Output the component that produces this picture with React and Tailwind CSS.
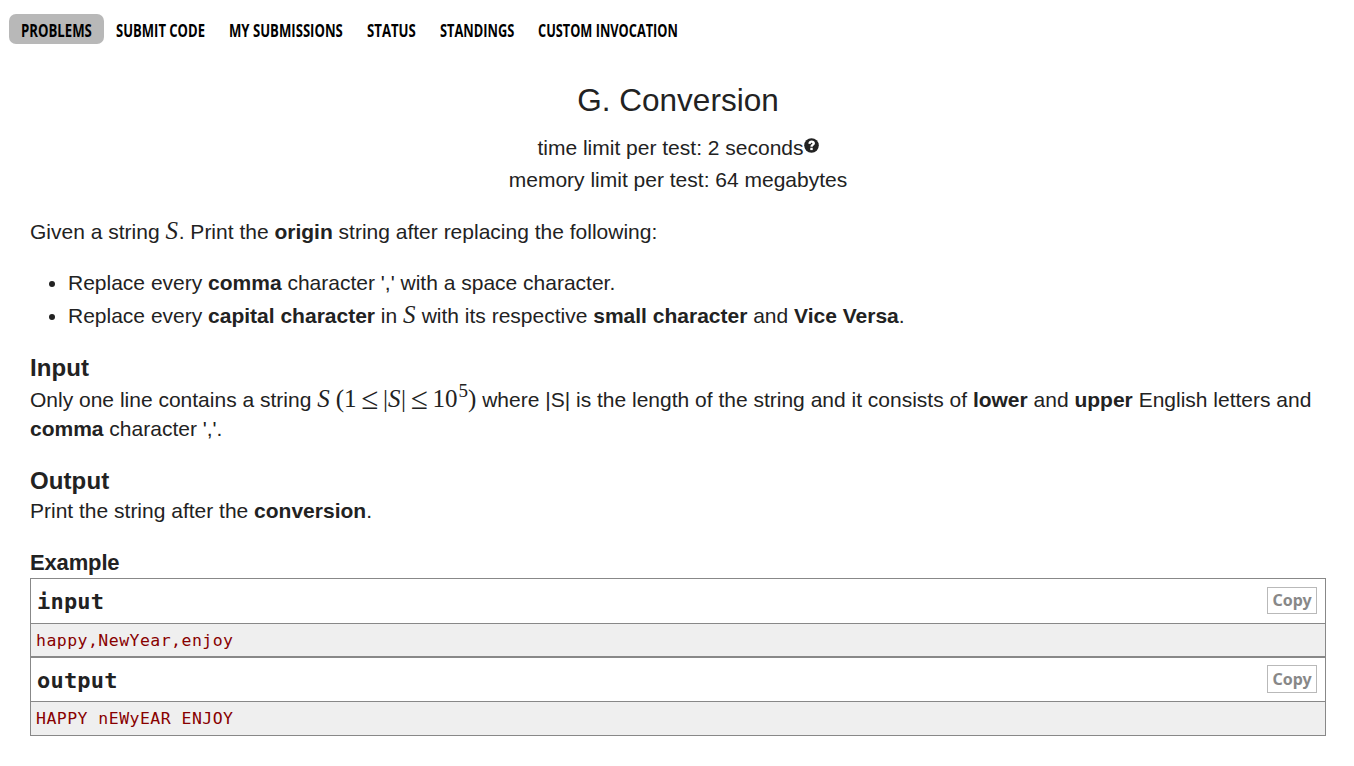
import React from "react";

const NAV = [
  { label: "PROBLEMS", active: true, width: "w-[95px]", scale: "scale-x-[0.732]" },
  { label: "SUBMIT CODE", width: "w-[113px]", scale: "scale-x-[0.724]" },
  { label: "MY SUBMISSIONS", width: "w-[138px]", scale: "scale-x-[0.729]" },
  { label: "STATUS", width: "w-[73px]", scale: "scale-x-[0.732]" },
  { label: "STANDINGS", width: "w-[98px]", scale: "scale-x-[0.713]" },
  { label: "CUSTOM INVOCATION", width: "w-[164px]", scale: "scale-x-[0.709]" },
];

function NavItem({ label, active, width, scale }) {
  return (
    <a
      className={`flex h-[30px] shrink-0 items-center rounded-[7px] pl-3 pt-px whitespace-nowrap ${width} ${active ? "bg-[#b8b8b8]" : ""}`}
    >
      <span className={`inline-block origin-left font-['Open_Sans',sans-serif] text-[18px] leading-[28px] font-bold text-black ${scale}`}>
        {label}
      </span>
    </a>
  );
}

function MathText({ children, className = "" }) {
  return (
    <span className={`font-['Liberation_Serif',serif] text-[25px] leading-[0] tracking-normal ${className}`}>
      {children}
    </span>
  );
}

function LessEqual() {
  return <span className="relative top-0.5 mx-[5px] inline-block w-[16.5px] text-center text-[31px]">≤</span>;
}

function HelpIcon() {
  return (
    <svg viewBox="0 0 16 16" className="mt-[5px] h-[15px] w-[15px] shrink-0">
      <circle cx="8" cy="8" r="7.8" fill="#222" />
      <path d="M4.6 6.1C4.8 3.8 6.3 2.6 8.1 2.6c2.2 0 3.6 1.3 3.6 3.1 0 2.3-2.4 2.4-2.4 3.7H6.8c0-2.5 2.2-2.5 2.2-3.7 0-1.1-1.8-1.1-2 .7z" fill="#fff" />
      <rect x="6.7" y="10.4" width="2.6" height="2.5" fill="#fff" />
    </svg>
  );
}

function Sample({ title, text, titleHeight, textHeight, copyHeight, copyOffset }) {
  return (
    <div className="border border-[#888]">
      <div className={`flex items-start justify-between border-b border-[#888] pl-1.5 pr-2 ${titleHeight}`}>
        <h4 className="pt-2 font-['DejaVu_Sans_Mono',monospace] text-[22px] leading-[30px] font-bold tracking-[0.2px]">
          {title}
        </h4>
        <button
          className={`flex w-[50px] items-center justify-center border border-[#b9b9b9] font-['Noto_Sans',sans-serif] text-[16px] leading-[23px] font-bold text-[#888] ${copyHeight} ${copyOffset}`}
        >
          Copy
        </button>
      </div>
      <pre
        className={`bg-[#efefef] pl-[5px] font-['DejaVu_Sans_Mono',monospace] text-[16.5px] leading-[33px] tracking-[0.46px] text-[#880000] ${textHeight}`}
      >
        {text}
      </pre>
    </div>
  );
}

export default function App() {
  return (
    <div className="h-[766px] w-[1354px] overflow-hidden bg-white font-['Liberation_Sans',sans-serif] text-[21px] leading-[30px] text-[#222]">
      <nav className="flex pt-3.5 pl-[9px]">
        {NAV.map((item) => (
          <NavItem key={item.label} {...item} />
        ))}
      </nav>

      <main className="pr-7 pl-[30px]">
        <header className="flex flex-col items-center pt-[38px]">
          <h1 className="text-[31.5px] leading-[36px]">G. Conversion</h1>
          <div className="mt-[15px] flex h-[32px]">
            <span>time limit per test: 2 seconds</span>
            <HelpIcon />
          </div>
          <div className="h-[32px]">memory limit per test: 64 megabytes</div>
        </header>

        <p className="mt-5 h-[30px] whitespace-nowrap">
          Given a string <MathText className="mr-[0.8px] italic">S</MathText>. Print the <b>origin</b> string after
          replacing the following:
        </p>

        <ul className="mt-[19px] h-[66px] list-disc pl-[38px] leading-[33px] whitespace-nowrap">
          <li>
            Replace every <b>comma</b> character ',' with a space character.
          </li>
          <li>
            Replace every <b>capital character</b> in <MathText className="mr-[0.3px] italic">S</MathText> with its
            respective <b>small character</b> and <b>Vice Versa</b>.
          </li>
        </ul>

        <section className="mt-[21px] whitespace-nowrap">
          <h2 className="text-[24px] leading-[30px] font-bold tracking-[0.1px]">Input</h2>
          <p className="mt-0.5 h-[30px]">
            Only one line contains a string{" "}
            <MathText>
              <i>S</i>
              <span className="ml-1.5">(1</span>
              <LessEqual />|<i className="mr-[0.5px]">S</i>|<LessEqual />
              10
              <span className="relative -top-[10px] ml-px text-[19px]">5</span>)
            </MathText>{" "}
            where |S| is the length of the string and it consists of <b>lower</b> and <b>upper</b> English letters and
          </p>
          <p className="-mt-px">
            <b>comma</b> character ','.
          </p>
        </section>

        <section className="mt-[22px]">
          <h2 className="text-[24px] leading-[30px] font-bold tracking-[0.1px]">Output</h2>
          <p>
            Print the string after the <b>conversion</b>.
          </p>
        </section>

        <section className="mt-[22px]">
          <h2 className="text-[22px] leading-[30px] font-bold tracking-[-0.15px]">Example</h2>
          <div>
            <Sample
              title="input"
              text="happy,NewYear,enjoy"
              titleHeight="h-[45px]"
              textHeight="h-[32px]"
              copyHeight="h-[27px]"
              copyOffset="mt-2"
            />
            <Sample
              title="output"
              text="HAPPY nEWyEAR ENJOY"
              titleHeight="h-[44px]"
              textHeight="h-[33px]"
              copyHeight="h-[28px]"
              copyOffset="mt-[7px]"
            />
          </div>
        </section>
      </main>
    </div>
  );
}
